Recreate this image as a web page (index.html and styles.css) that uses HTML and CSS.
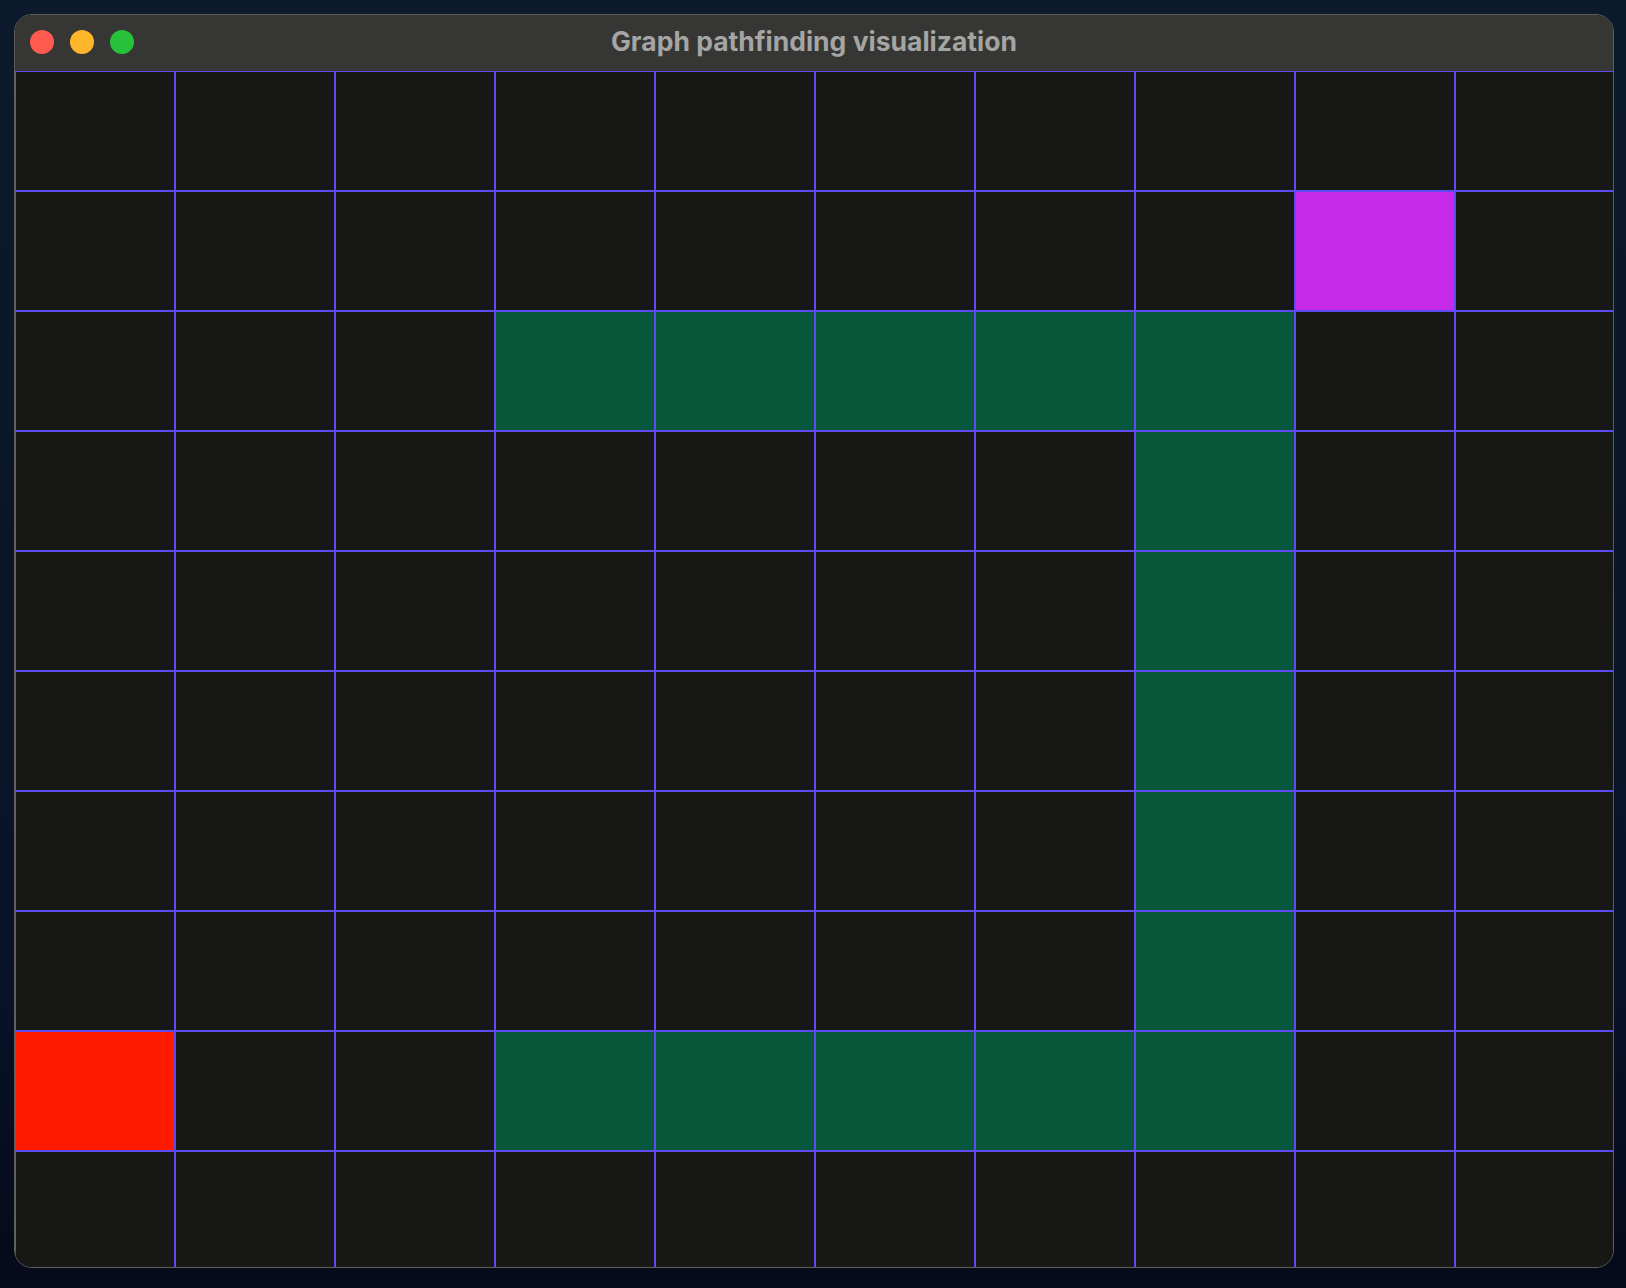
FILE: index.html
```html
<!DOCTYPE html>
<html>
<head>
<meta charset="utf-8">
<title>Graph pathfinding visualization</title>
<link rel="stylesheet" href="styles.css">
</head>
<body>
<div class="desktop">
  <div class="window">
    <div class="titlebar">
      <div class="lights">
        <span class="light red"></span>
        <span class="light yellow"></span>
        <span class="light green"></span>
      </div>
      <div class="title">Graph pathfinding visualization</div>
    </div>
    <div class="canvas">
      <div class="grid">
        <div class="cell"></div><div class="cell"></div><div class="cell"></div><div class="cell"></div><div class="cell"></div><div class="cell"></div><div class="cell"></div><div class="cell"></div><div class="cell"></div><div class="cell"></div>
        <div class="cell"></div><div class="cell"></div><div class="cell"></div><div class="cell"></div><div class="cell"></div><div class="cell"></div><div class="cell"></div><div class="cell"></div><div class="cell goal"></div><div class="cell"></div>
        <div class="cell"></div><div class="cell"></div><div class="cell"></div><div class="cell path"></div><div class="cell path"></div><div class="cell path"></div><div class="cell path"></div><div class="cell path"></div><div class="cell"></div><div class="cell"></div>
        <div class="cell"></div><div class="cell"></div><div class="cell"></div><div class="cell"></div><div class="cell"></div><div class="cell"></div><div class="cell"></div><div class="cell path"></div><div class="cell"></div><div class="cell"></div>
        <div class="cell"></div><div class="cell"></div><div class="cell"></div><div class="cell"></div><div class="cell"></div><div class="cell"></div><div class="cell"></div><div class="cell path"></div><div class="cell"></div><div class="cell"></div>
        <div class="cell"></div><div class="cell"></div><div class="cell"></div><div class="cell"></div><div class="cell"></div><div class="cell"></div><div class="cell"></div><div class="cell path"></div><div class="cell"></div><div class="cell"></div>
        <div class="cell"></div><div class="cell"></div><div class="cell"></div><div class="cell"></div><div class="cell"></div><div class="cell"></div><div class="cell"></div><div class="cell path"></div><div class="cell"></div><div class="cell"></div>
        <div class="cell"></div><div class="cell"></div><div class="cell"></div><div class="cell"></div><div class="cell"></div><div class="cell"></div><div class="cell"></div><div class="cell path"></div><div class="cell"></div><div class="cell"></div>
        <div class="cell start"></div><div class="cell"></div><div class="cell"></div><div class="cell path"></div><div class="cell path"></div><div class="cell path"></div><div class="cell path"></div><div class="cell path"></div><div class="cell"></div><div class="cell"></div>
        <div class="cell"></div><div class="cell"></div><div class="cell"></div><div class="cell"></div><div class="cell"></div><div class="cell"></div><div class="cell"></div><div class="cell"></div><div class="cell"></div><div class="cell"></div>
      </div>
    </div>
  </div>
</div>
</body>
</html>
```

FILE: styles.css
```css
html, body {
  margin: 0;
  padding: 0;
}

body {
  width: 1626px;
  height: 1288px;
  overflow: hidden;
  background: linear-gradient(180deg, #0b1a2c 0%, #0a1628 45%, #08122a 75%, #060a1a 100%);
  font-family: "Inter", "Liberation Sans", sans-serif;
}

.desktop {
  padding: 14px 0 0 14px;
}

.window {
  width: 1598px;
  height: 1252px;
  border: 1px solid #5e5d58;
  border-radius: 18px;
  overflow: hidden;
  background: #171715;
  display: flex;
  flex-direction: column;
}

.titlebar {
  position: relative;
  height: 56px;
  flex: 0 0 56px;
  background: #363634;
  display: flex;
  align-items: center;
  justify-content: center;
}

.lights {
  position: absolute;
  left: 15px;
  top: 15px;
  display: flex;
  gap: 16px;
}

.light {
  width: 24px;
  height: 24px;
  border-radius: 50%;
}

.light.red { background: #fe5a50; }
.light.yellow { background: #fdb52a; }
.light.green { background: #27c23a; }

.title {
  color: #a5a5a3;
  font-size: 26.5px;
  font-weight: 700;
  line-height: 1;
  margin-top: -4px;
}

.canvas {
  flex: 1;
  overflow: hidden;
}

.grid {
  display: grid;
  grid-template-columns: repeat(10, 160px);
  grid-auto-rows: 120px;
}

.cell {
  background: #171715;
  box-shadow: inset 0 0 0 1px #5d4af2;
}

.cell.path {
  background: #08573a;
}

.cell.goal {
  background: #c42ae8;
}

.cell.start {
  background: #ff1a00;
}
```
